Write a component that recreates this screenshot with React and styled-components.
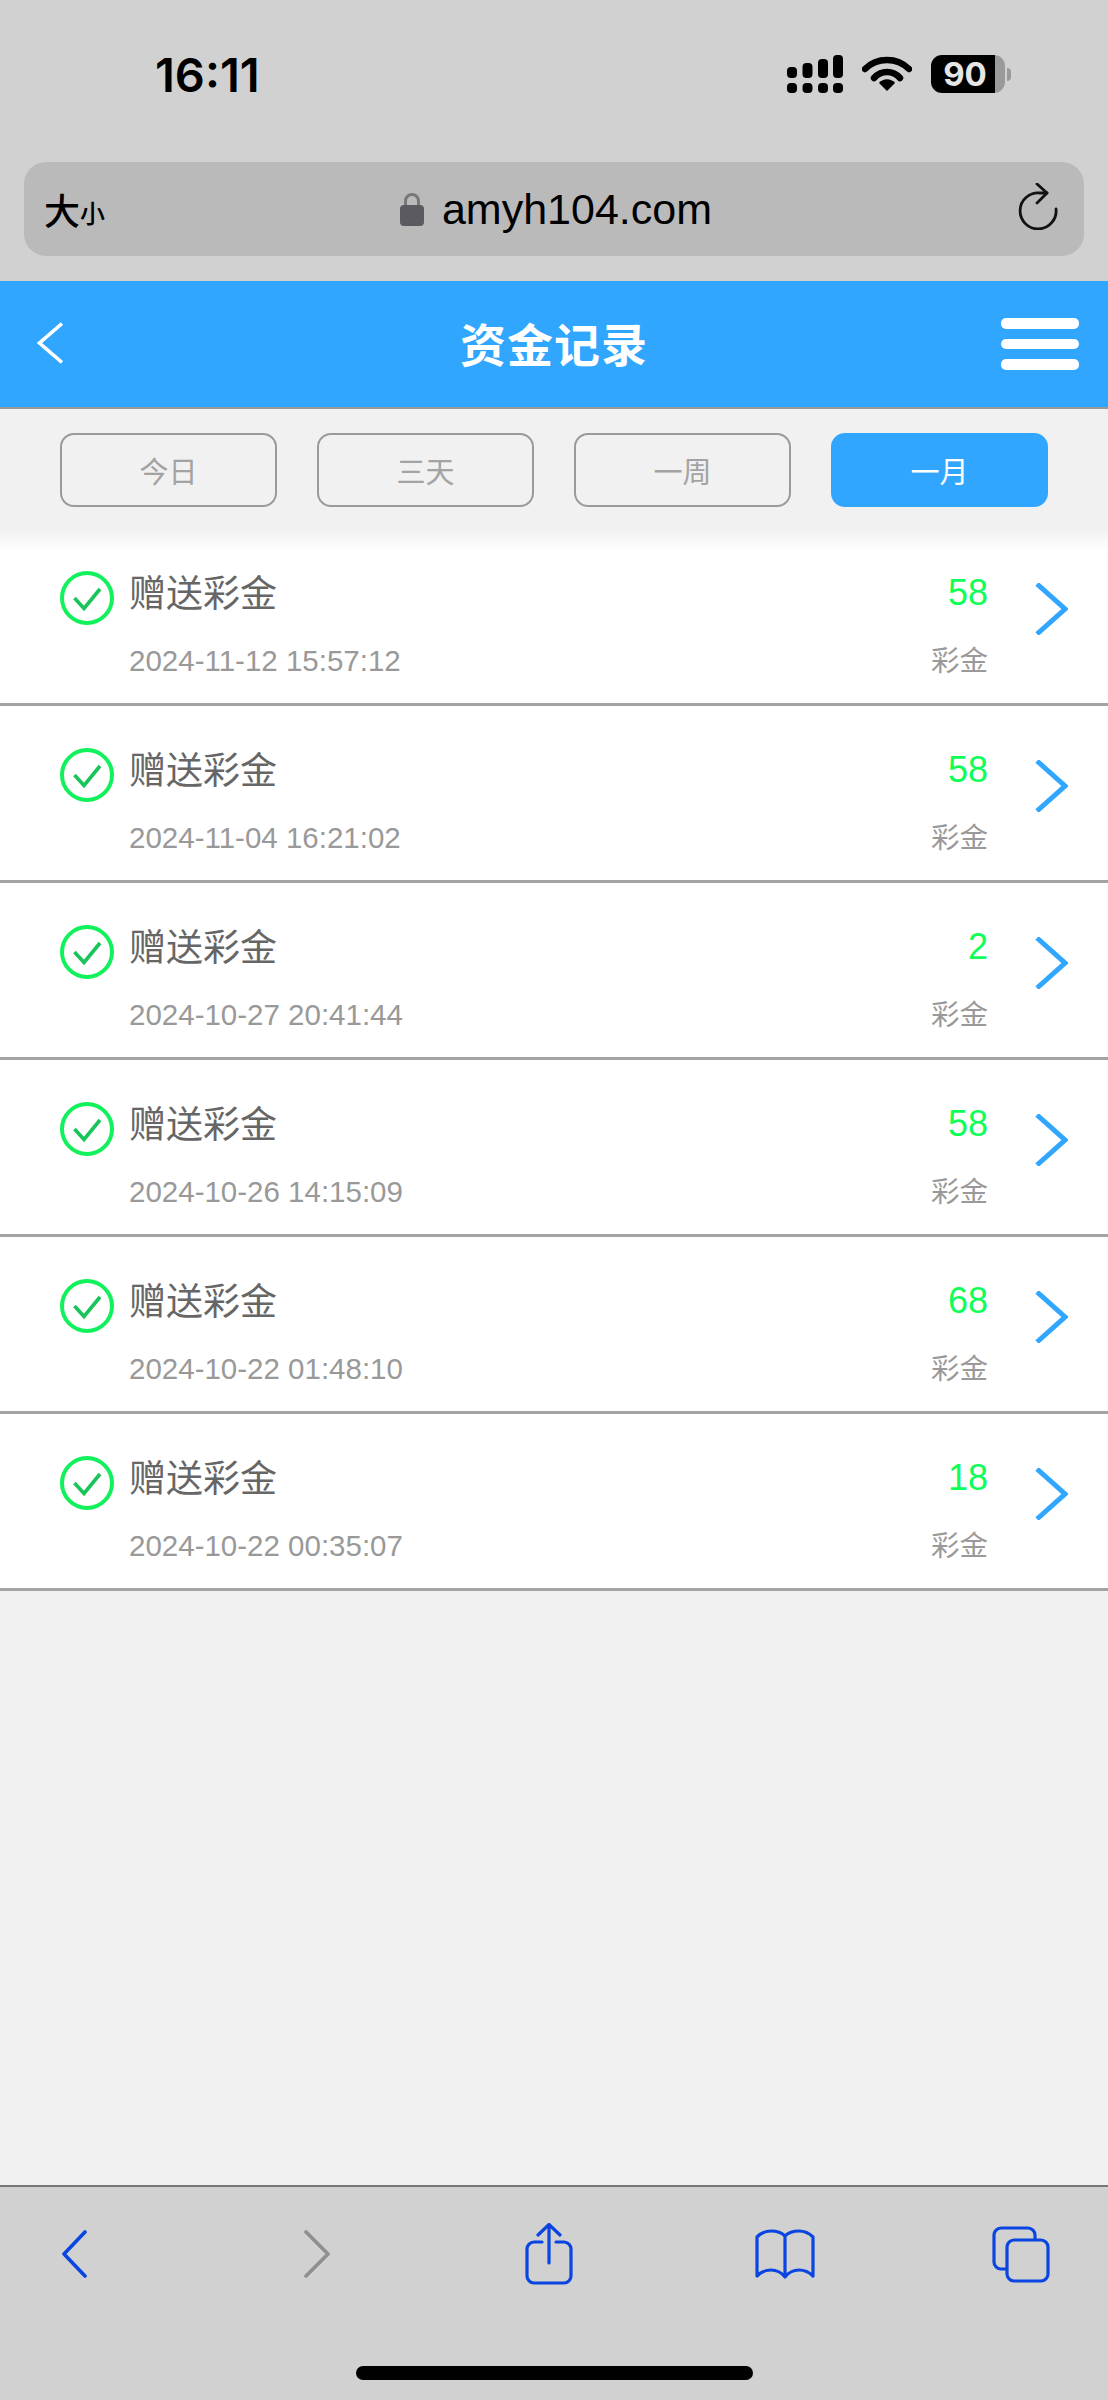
import React from "react";
import styled, { createGlobalStyle } from "styled-components";

const records = [
  { time: "2024-11-12 15:57:12", amount: "58" },
  { time: "2024-11-04 16:21:02", amount: "58" },
  { time: "2024-10-27 20:41:44", amount: "2" },
  { time: "2024-10-26 14:15:09", amount: "58" },
  { time: "2024-10-22 01:48:10", amount: "68" },
  { time: "2024-10-22 00:35:07", amount: "18" },
];

const ranges = ["今日", "三天", "一周", "一月"];

const App = () => {
  return (
    <Page>
      <GlobalStyle />
      <Chrome>
        <StatusBar>
          <Clock>16:11</Clock>
          <StatusIcons>
            <svg width="56" height="38" viewBox="0 0 56 38" fill="#000">
              <rect x="0" y="12" width="10" height="11" rx="4" />
              <rect x="15.5" y="8" width="10" height="15" rx="4" />
              <rect x="31" y="4" width="10" height="19" rx="4" />
              <rect x="46" y="0" width="10" height="23" rx="4" />
              <rect x="0" y="28" width="10" height="10" rx="4" />
              <rect x="15.5" y="28" width="10" height="10" rx="4" />
              <rect x="31" y="28" width="10" height="10" rx="4" />
              <rect x="46" y="28" width="10" height="10" rx="4" />
            </svg>
            <svg width="50" height="36" viewBox="0 0 50 36" fill="none">
              <path d="M3 14 C15 2 35 2 47 14" stroke="#000" strokeWidth="6.5" strokeLinecap="round" />
              <path d="M12 23 C19 15 31 15 38 23" stroke="#000" strokeWidth="6.5" strokeLinecap="round" />
              <path d="M17 28 C21 23 29 23 33 28 L25 36 Z" fill="#000" />
            </svg>
            <Battery>
              <BatteryLevel>90</BatteryLevel>
              <BatteryCap />
            </Battery>
          </StatusIcons>
        </StatusBar>
        <AddressRow>
          <AddressBar>
            <TextSize>
              <BigChar>大</BigChar>
              <SmallChar>小</SmallChar>
            </TextSize>
            <Domain>
              <svg width="24" height="34" viewBox="0 0 24 34" fill="none">
                <path d="M5.5 15 V9 a6.5 6.5 0 0 1 13 0 V15" stroke="#77767b" strokeWidth="3" />
                <rect x="0" y="13" width="24" height="21" rx="4" fill="#5b5a60" />
              </svg>
              <DomainText>amyh104.com</DomainText>
            </Domain>
            <ReloadIcon width="40" height="47" viewBox="0 0 40 47" fill="none" stroke="#111" strokeWidth="2.8" strokeLinecap="round" strokeLinejoin="round">
              <path d="M29 10 H22 A18 18 0 1 0 38 26" />
              <path d="M19 1 L29 10 L19 20" />
            </ReloadIcon>
          </AddressBar>
        </AddressRow>
      </Chrome>

      <Header>
        <BackIcon width="26" height="42" viewBox="0 0 26 42" fill="none" stroke="#fff" strokeWidth="3.6">
          <path d="M25 1.5 L2.5 21 L25 40.5" />
        </BackIcon>
        <HeaderTitle>资金记录</HeaderTitle>
        <Burger>
          <BurgerLine />
          <BurgerLine />
          <BurgerLine />
        </Burger>
      </Header>

      <FilterBar>
        {ranges.map((range, index) => (
          <RangeButton key={range} $active={index === ranges.length - 1}>
            {range}
          </RangeButton>
        ))}
      </FilterBar>

      <List>
        {records.map((record) => (
          <Row key={record.time}>
            <svg width="54" height="54" viewBox="0 0 54 54" fill="none">
              <circle cx="27" cy="27" r="25" stroke="#11f15c" strokeWidth="4" />
              <path d="M14.5 27 L24 37.5 L40 18" stroke="#19c45a" strokeWidth="3.6" />
            </svg>
            <RowMain>
              <RowTitle>赠送彩金</RowTitle>
              <RowTime>{record.time}</RowTime>
            </RowMain>
            <RowSide>
              <Amount>{record.amount}</Amount>
              <Kind>彩金</Kind>
            </RowSide>
            <svg width="33" height="52" viewBox="0 0 33 52" fill="none" stroke="#31a6ff" strokeWidth="5">
              <path d="M2 1 L30 26 L2 51" />
            </svg>
          </Row>
        ))}
      </List>

      <Spacer />

      <Toolbar>
        <ToolRow>
          <ToolIcon $gap={62}>
            <svg width="25" height="48" viewBox="0 0 25 48" fill="none" stroke="#0a45e2" strokeWidth="3.6" strokeLinecap="round" strokeLinejoin="round">
              <path d="M23 2 L2 24 L23 46" />
            </svg>
          </ToolIcon>
          <ToolIcon $gap={216}>
            <svg width="27" height="48" viewBox="0 0 27 48" fill="none" stroke="#8f8f8f" strokeWidth="3.6" strokeLinecap="round" strokeLinejoin="round">
              <path d="M3 2 L25 24 L3 46" />
            </svg>
          </ToolIcon>
          <ToolIcon $gap={195}>
            <svg width="48" height="62" viewBox="0 0 48 62" fill="none" stroke="#0a45e2" strokeWidth="3.2" strokeLinecap="round" strokeLinejoin="round">
              <path d="M17 19 H9 a7 7 0 0 0 -7 7 V53 a7 7 0 0 0 7 7 H39 a7 7 0 0 0 7 -7 V26 a7 7 0 0 0 -7 -7 H31" />
              <path d="M24 40 V2 M13 12 L24 1.5 L35 12" />
            </svg>
          </ToolIcon>
          <ToolIcon $gap={182}>
            <svg width="60" height="50" viewBox="0 0 60 50" fill="none" stroke="#0a45e2" strokeWidth="3.2" strokeLinecap="round" strokeLinejoin="round">
              <path d="M30 7 C26 3 21 2 16 2 C10 2 6 4 2 8 V47 C6 43 11 41 16 41 C21 41 26 43 30 48 C34 43 39 41 44 41 C49 41 54 43 58 47 V8 C54 4 50 2 44 2 C39 2 34 3 30 7 V47" />
            </svg>
          </ToolIcon>
          <ToolIcon $gap={177}>
            <svg width="58" height="57" viewBox="0 0 58 57" fill="none" stroke="#0a45e2" strokeWidth="3.2" strokeLinejoin="round">
              <path d="M43 13 V9 a7 7 0 0 0 -7 -7 H9 a7 7 0 0 0 -7 7 V36 a7 7 0 0 0 7 7 H14" />
              <rect x="15" y="14" width="41" height="41" rx="7" />
            </svg>
          </ToolIcon>
        </ToolRow>
        <HomeIndicator />
      </Toolbar>
    </Page>
  );
};

export default App;

const GlobalStyle = createGlobalStyle`
  html, body {
    margin: 0;
    padding: 0;
    background: #f1f1f1;
  }
`;

const cjk = `"Liberation Sans", "Noto Sans CJK SC", sans-serif`;

const Page = styled.div`
  width: 1108px;
  height: 2400px;
  display: flex;
  flex-direction: column;
  background: #f1f1f1;
  font-family: ${cjk};
  overflow: hidden;
`;

const Chrome = styled.div`
  height: 281px;
  background: #d1d1d1;
  display: flex;
  flex-direction: column;
`;

const StatusBar = styled.div`
  height: 162px;
  box-sizing: border-box;
  padding: 55px 97px 0 155px;
  display: flex;
  justify-content: space-between;
  align-items: flex-start;
`;

const Clock = styled.div`
  font-family: Inter, sans-serif;
  font-weight: 600;
  font-size: 47px;
  line-height: 40px;
  color: #000;
`;

const StatusIcons = styled.div`
  display: flex;
  align-items: flex-start;
  gap: 19px;
`;

const Battery = styled.div`
  display: flex;
  align-items: center;
  gap: 2px;
`;

const BatteryLevel = styled.div`
  width: 74px;
  height: 38px;
  box-sizing: border-box;
  border-radius: 11px;
  background: linear-gradient(90deg, #000 0 87%, #9a9a9a 87% 100%);
  color: #e6e6e6;
  font-family: Inter, sans-serif;
  font-weight: 700;
  font-size: 33px;
  line-height: 38px;
  text-align: center;
  padding-right: 6px;
`;

const BatteryCap = styled.div`
  width: 4px;
  height: 13px;
  background: #9a9a9a;
  border-radius: 0 6px 6px 0;
`;

const AddressRow = styled.div`
  padding: 0 24px;
`;

const AddressBar = styled.div`
  height: 94px;
  box-sizing: border-box;
  padding: 0 26px 0 20px;
  background: #bababa;
  border-radius: 22px;
  display: flex;
  align-items: center;
  justify-content: space-between;
`;

const ReloadIcon = styled.svg`
  margin-bottom: 5px;
`;

const TextSize = styled.div`
  width: 62px;
  display: flex;
  align-items: flex-end;
  color: #000;
  font-family: "Noto Sans CJK SC", sans-serif;
`;

const BigChar = styled.span`
  font-size: 36px;
  font-weight: 500;
  line-height: 40px;
`;

const SmallChar = styled.span`
  font-size: 25px;
  font-weight: 500;
  line-height: 34px;
`;

const Domain = styled.div`
  display: flex;
  align-items: center;
  gap: 18px;
  margin-right: 12px;
`;

const DomainText = styled.span`
  font-size: 43px;
  line-height: 48px;
  color: #000;
`;

const Header = styled.div`
  height: 128px;
  box-sizing: border-box;
  padding: 0 29px 0 37px;
  background: #31a6ff;
  border-bottom: 2px solid #999;
  display: grid;
  grid-template-columns: 1fr auto 1fr;
  align-items: center;
`;

const BackIcon = styled.svg`
  margin-bottom: 3px;
`;

const HeaderTitle = styled.div`
  color: #fff;
  font-size: 46px;
  font-weight: 700;
  letter-spacing: 1px;
  margin: 0 8px 5px 0;
`;

const Burger = styled.div`
  width: 78px;
  justify-self: end;
  display: flex;
  flex-direction: column;
  gap: 10px;
`;

const BurgerLine = styled.div`
  height: 10.5px;
  border-radius: 5px;
  background: #fff;
`;

const FilterBar = styled.div`
  height: 120px;
  box-sizing: border-box;
  padding: 24px 60px 0;
  display: flex;
  gap: 40px;
  background: #f1f1f1;
`;

const RangeButton = styled.div`
  width: 218px;
  height: 74px;
  box-sizing: border-box;
  border-radius: 14px;
  border: 2.5px solid ${(props) => (props.$active ? "#31a6ff" : "#9a9a9a")};
  background: ${(props) => (props.$active ? "#31a6ff" : "transparent")};
  color: ${(props) => (props.$active ? "#fff" : "#a3a3a3")};
  font-size: 29px;
  display: flex;
  align-items: center;
  justify-content: center;
`;

const List = styled.div`
  display: flex;
  flex-direction: column;
  background: linear-gradient(180deg, #f1f1f1 0, #fff 22px);
`;

const Row = styled.div`
  height: 177px;
  box-sizing: border-box;
  padding: 0 40px 0 60px;
  border-bottom: 3px solid #a3a3a3;
  display: flex;
  align-items: flex-start;

  & > svg:first-child {
    margin-top: 42px;
    flex-shrink: 0;
  }

  & > svg:last-child {
    margin: 54px 0 0 47px;
    flex-shrink: 0;
  }
`;

const RowMain = styled.div`
  flex: 1;
  margin-left: 15px;
  display: flex;
  flex-direction: column;
`;

const RowTitle = styled.div`
  margin-top: 40px;
  font-size: 37px;
  line-height: 52px;
  color: #666;
`;

const RowTime = styled.div`
  margin-top: 23px;
  font-size: 29.5px;
  line-height: 34px;
  color: #999;
`;

const RowSide = styled.div`
  display: flex;
  flex-direction: column;
  align-items: flex-end;
`;

const Amount = styled.div`
  margin-top: 38px;
  font-size: 36px;
  line-height: 52px;
  color: #0dff58;
`;

const Kind = styled.div`
  margin-top: 25px;
  font-size: 28.5px;
  line-height: 34px;
  color: #999;
`;

const Spacer = styled.div`
  flex: 1;
`;

const Toolbar = styled.div`
  height: 215px;
  box-sizing: border-box;
  background: #d1d1d1;
  border-top: 2px solid #777;
  display: flex;
  flex-direction: column;
  align-items: center;
`;

const ToolRow = styled.div`
  width: 100%;
  height: 62px;
  margin-top: 36px;
  display: flex;
  align-items: center;
`;

const ToolIcon = styled.div`
  margin-left: ${(props) => props.$gap}px;
  display: flex;
`;

const HomeIndicator = styled.div`
  width: 397px;
  height: 14px;
  margin-top: 81px;
  border-radius: 7px;
  background: #000;
`;
